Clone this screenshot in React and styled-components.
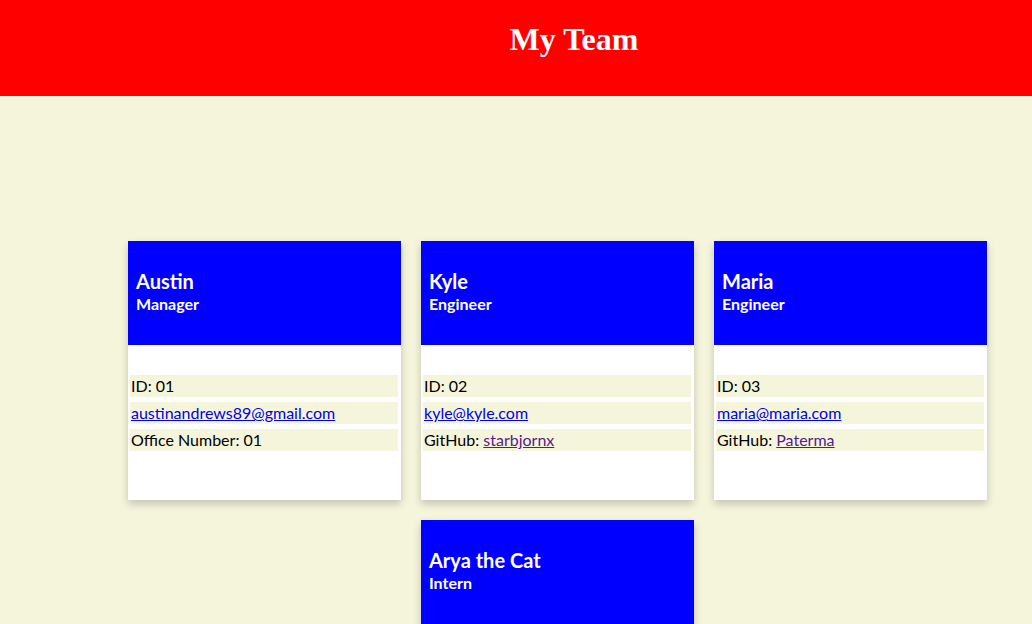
import React from "react";
import styled, { createGlobalStyle } from "styled-components";

const GlobalStyle = createGlobalStyle`
  body {
    margin: 0;
    background: #f5f5dc;
    font-family: Lato, "Open Sans", sans-serif;
  }
`;

const team = [
  { name: "Austin", role: "Manager", id: "01", email: "austinandrews89@gmail.com", extraLabel: "Office Number", extra: "01" },
  { name: "Kyle", role: "Engineer", id: "02", email: "kyle@kyle.com", extraLabel: "GitHub", github: "starbjornx" },
  { name: "Maria", role: "Engineer", id: "03", email: "maria@maria.com", extraLabel: "GitHub", github: "Paterma" },
  { name: "Arya the Cat", role: "Intern", id: "04", email: "arya@cat.com", extraLabel: "School", extra: "UofCat" },
];

const Header = styled.header`
  height: 96px;
  background: #ff0000;
  display: flex;
  justify-content: center;
  padding-left: 116px;
  box-sizing: border-box;
`;

const Title = styled.h1`
  margin: 21px 0 0;
  font-family: "Liberation Serif", serif;
  font-size: 32px;
  font-weight: bold;
  color: #fff;
`;

const Grid = styled.main`
  display: flex;
  flex-wrap: wrap;
  justify-content: center;
  gap: 20px;
  padding: 145px 0 40px 83px;
`;

const Card = styled.div`
  width: 273px;
  height: 259px;
  background: #fff;
  box-shadow: 0 4px 8px rgba(0, 0, 0, 0.2);
`;

const CardHead = styled.div`
  height: 104px;
  background: #0000ff;
  color: #fff;
  padding: 28px 9px 0 8px;
  box-sizing: border-box;
`;

const Name = styled.div`
  font-size: 20px;
  font-weight: bold;
  line-height: 24px;
`;

const Role = styled.div`
  font-size: 16px;
  font-weight: bold;
  line-height: 21px;
`;

const List = styled.ul`
  list-style: none;
  margin: 0;
  padding: 30px 3px 0 2px;
  display: flex;
  flex-direction: column;
  gap: 5px;
`;

const Item = styled.li`
  background: #f5f5dc;
  height: 22px;
  line-height: 22px;
  padding-left: 1px;
  font-size: 16px;
  color: #000;
`;

const Link = styled.a`
  color: ${(p) => (p.$visited ? "#551a8b" : "#0000ee")};
`;

export default function App() {
  return (
    <>
      <GlobalStyle />
      <Header>
        <Title>My Team</Title>
      </Header>
      <Grid>
        {team.map((m) => (
          <Card key={m.id}>
            <CardHead>
              <Name>{m.name}</Name>
              <Role>{m.role}</Role>
            </CardHead>
            <List>
              <Item>ID: {m.id}</Item>
              <Item>
                <Link href={`mailto:${m.email}`}>{m.email}</Link>
              </Item>
              <Item>
                {m.extraLabel}:{" "}
                {m.github ? (
                  <Link $visited href={`#${m.github}`}>{m.github}</Link>
                ) : (
                  m.extra
                )}
              </Item>
            </List>
          </Card>
        ))}
      </Grid>
    </>
  );
}
